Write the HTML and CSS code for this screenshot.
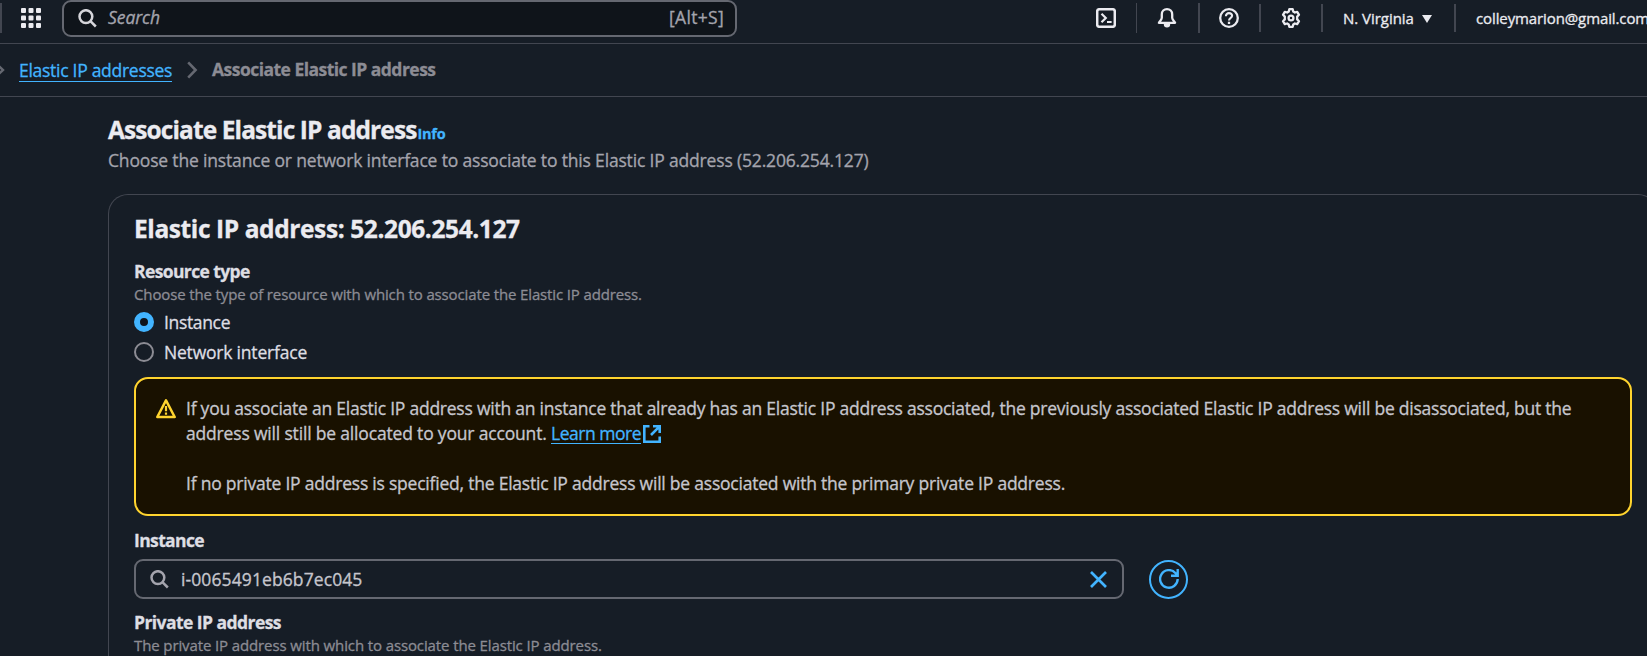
FILE: index.html
```html
<!DOCTYPE html>
<html lang="en">
<head>
<meta charset="utf-8">
<title>Associate Elastic IP address</title>
<link rel="stylesheet" href="styles.css">
</head>
<body>
<header class="topbar">
  <span class="edge"></span>
  <svg class="apps" width="20" height="20" viewBox="0 0 20 20" fill="#ebebf0">
    <rect x="0" y="0" width="5" height="5" rx="1"/><rect x="7.5" y="0" width="5" height="5" rx="1"/><rect x="15" y="0" width="5" height="5" rx="1"/>
    <rect x="0" y="7.5" width="5" height="5" rx="1"/><rect x="7.5" y="7.5" width="5" height="5" rx="1"/><rect x="15" y="7.5" width="5" height="5" rx="1"/>
    <rect x="0" y="15" width="5" height="5" rx="1"/><rect x="7.5" y="15" width="5" height="5" rx="1"/><rect x="15" y="15" width="5" height="5" rx="1"/>
  </svg>
  <div class="search">
    <svg width="19" height="19" viewBox="0 0 19 19" fill="none" stroke="#d5d5da" stroke-width="2.5"><circle cx="7.9" cy="7.6" r="6.4"/><path d="M12.4 12.1l5.4 5.4"/></svg>
    <span class="placeholder">Search</span>
    <span class="shortcut">[Alt+S]</span>
  </div>
  <nav class="tools">
    <span class="tool shell"><svg width="20" height="20" viewBox="0 0 20 20" fill="none" stroke="#ebebf0" stroke-width="2.5"><rect x="1.2" y="1.2" width="17.6" height="17.6" rx="2.2"/><path d="M5.5 5.7L9.8 10l-4.3 4.3M11 14h4.6" stroke-width="2.2"/></svg></span>
    <span class="tool bell"><svg width="20" height="20" viewBox="0 0 20 20" fill="none" stroke="#ebebf0" stroke-width="2.3" stroke-linejoin="round"><path d="M10 1.2c-3 0-5.2 2.200-5.200 5.200v3.400c0 2-1.700 3-2.900 5h16.200c-1.200-2-2.900-3-2.900-5V6.400c0-3-2.200-5.200-5.200-5.200z"/><path d="M7.500 16.300a2.500 2.500 0 0 0 5 0z" fill="#ebebf0" stroke-width="1.400"/></svg></span>
    <span class="tool help"><svg width="20" height="20" viewBox="0 0 20 20" fill="none" stroke="#ebebf0" stroke-width="2.3"><circle cx="10" cy="10" r="8.8"/><path d="M6.900 8.200c0-2 1.300-3.100 3.100-3.100s3.100 1.100 3.100 2.700c0 2.200-3.100 2-3.100 4.700" stroke-width="2.100"/><path d="M10 13.700v2.300"/></svg></span>
    <span class="tool gear"><svg width="20" height="20" viewBox="0 0 20 20" fill="none" stroke="#ebebf0" stroke-width="2.3" stroke-linejoin="round"><path d="M8.300 1.200h3.400l.6 2.400 1.500.9 2.400-.7 1.800 3-1.800 1.800v2.800l1.800 1.800-1.800 3-2.400-.7-1.500.9-.6 2.400H8.300l-.6-2.400-1.500-.9-2.400.7-1.800-3 1.800-1.800V8.600L2 6.800l1.800-3 2.400.7 1.500-.9z"/><circle cx="10" cy="10" r="2.4"/></svg></span>
    <span class="region">N. Virginia</span>
    <svg class="caret" width="10" height="8" viewBox="0 0 10 8"><path d="M0 0h10L5 8z" fill="#ebebf0"/></svg>
    <span class="account">colleymarion@gmail.com</span>
  </nav>
</header>
<nav class="crumbs">
  <svg width="5" height="16" viewBox="6 0 5 16" fill="none" stroke="#656871" stroke-width="2.4"><path d="M1.500 1L9 8l-7.500 7"/></svg>
  <a class="crumb-link">Elastic IP addresses</a>
  <svg class="sep" width="11" height="18" viewBox="0 0 11 18" fill="none" stroke="#656871" stroke-width="2.6"><path d="M1.200 1.400L8.600 9l-7.400 7.600"/></svg>
  <span class="crumb-here">Associate Elastic IP address</span>
</nav>
<main class="page">
  <div class="title-row"><h1>Associate Elastic IP address</h1><a class="info">Info</a></div>
  <p class="lead">Choose the instance or network interface to associate to this Elastic IP address (52.206.254.127)</p>
  <section class="card">
    <h2>Elastic IP address: 52.206.254.127</h2>
    <h3 class="label resource">Resource type</h3>
    <p class="hint">Choose the type of resource with which to associate the Elastic IP address.</p>
    <div class="radios">
      <label class="radio"><span class="dot on"></span><span class="inst">Instance</span></label>
      <label class="radio"><span class="dot"></span><span>Network interface</span></label>
    </div>
    <div class="alert">
      <svg class="warn" width="20" height="20" viewBox="0 0 20 20" fill="none" stroke="#ffd42e" stroke-width="2.5" stroke-linejoin="round"><path d="M10 1.400L18.700 18H1.300z"/><path d="M10 7v5.300M10 13.500v2.300" stroke-width="2.200"/></svg>
      <div>
        <p>If you associate an Elastic IP address with an instance that already has an Elastic IP address associated, the previously associated Elastic IP address will be disassociated, but the<br><span class="l2">address will still be allocated to your account. </span><a class="learn">Learn more</a><svg class="ext" width="18" height="18" viewBox="0 0 18 18" fill="none" stroke="#42b4ff" stroke-width="2.6"><path d="M6.500 1.300H1.300v15.400h15.400v-5.200M10 1.300h6.700V8M16.600 1.400L8 10"/></svg></p>
        <p class="second">If no private IP address is specified, the Elastic IP address will be associated with the primary private IP address.</p>
      </div>
    </div>
    <h3 class="label instance">Instance</h3>
    <div class="field">
      <div class="input">
        <svg width="19" height="19" viewBox="0 0 19 19" fill="none" stroke="#a4a4ad" stroke-width="2.5"><circle cx="7.900" cy="7.600" r="6.400"/><path d="M12.400 12.100l5.400 5.400"/></svg>
        <span class="value">i-0065491eb6b7ec045</span>
        <svg class="clear" width="17" height="17" viewBox="0 0 17 17" fill="none" stroke="#42b4ff" stroke-width="2.7"><path d="M1 1l15 15M16 1L1 16"/></svg>
      </div>
      <span class="refresh"><svg width="20" height="20" viewBox="0 0 20 20" fill="none" stroke="#42b4ff" stroke-width="2.4"><path d="M18.700 10a8.800 8.800 0 1 1-2.300-6L18 6M18.700 0v6.700H12"/></svg></span>
    </div>
    <h3 class="label private">Private IP address</h3>
    <p class="hint last">The private IP address with which to associate the Elastic IP address.</p>
  </section>
</main>
</body>
</html>
```
FILE: styles.css
```css
* { box-sizing: border-box; }
html { overflow: hidden; }
body {
  margin: 0; width: 1647px; height: 656px; overflow: hidden;
  background: #161d26; color: #dedee3;
  font: 400 17.5px/25px "Open Sans", "Noto Sans", sans-serif;
  letter-spacing: -.2px;
  -webkit-text-stroke: .3px;
}
h1, h2, h3, p { margin: 0; }
svg { display: block; flex: none; }
span, a, h1, h2, h3, p { white-space: nowrap; }

.topbar { display: flex; height: 44px; border-bottom: 1px solid #424650; }
.edge { width: 2px; height: 30px; margin-top: 3px; background: #424650; flex: none; }
.apps { margin: 8px 21px 0 19px; }
.search {
  display: flex; align-items: center; flex: none;
  width: 675px; height: 37px; padding: 0 11px 0 14px;
  border: 2px solid #656871; border-radius: 9px; background: #0f141a;
}
.placeholder { margin-left: 11px; padding-bottom: 2px; font-style: italic; letter-spacing: -.06px; color: #a4a4ad; }
.shortcut { margin-left: auto; padding-bottom: 2px; color: #a4a4ad; letter-spacing: .32px; }
.tools { display: flex; flex: none; margin-left: 345px; }
.tool { display: flex; height: 30px; margin-top: 3px; padding-top: 5px; border-right: 2px solid #424650; flex: none; }
.shell { width: 55px; padding-left: 14px; border-right-width: 1px; }
.bell { width: 63px; padding-left: 20px; }
.help { width: 61px; height: 28px; margin-top: 4px; padding: 4px 0 0 19px; }
.gear { width: 62px; height: 28px; margin-top: 4px; padding: 4px 0 0 20px; }
.region, .account { font-size: 15px; font-weight: 500; line-height: 20px; color: #ebebf0; }
.region { width: 70px; margin: 8px 0 0 20px; letter-spacing: -.03px; }
.caret { margin: 14.5px 0 0 9px; }
.account { margin: 4px 0 0 22px; padding: 4px 0 4px 20px; height: 28px; border-left: 2px solid #424650; letter-spacing: -.11px; }

.crumbs { display: flex; align-items: center; height: 53px; border-bottom: 1px solid #424650; }
.crumb-link { margin-left: 14px; width: 153px; height: 24px; margin-top: -1px; line-height: 24px; letter-spacing: -.28px; color: #42b4ff; border-bottom: 1px solid #42b4ff; }
.sep { margin: 0 14px 0 15px; }
.crumb-here { padding-bottom: 2px; font-weight: 700; letter-spacing: -.53px; color: #8c8c94; }

.page { padding: 18px 0 0 108px; }
.title-row { display: flex; height: 30px; }
h1, h2 { font-size: 24.5px; line-height: 30px; font-weight: 700; letter-spacing: -.9px; color: #ebebf0; }
h2 { letter-spacing: -.4px; }
.info { font-size: 14.5px; font-weight: 700; line-height: 30px; padding: 4px 0 0 1px; letter-spacing: -.23px; color: #42b4ff; }
.lead { margin-top: 3px; letter-spacing: -.168px; color: #a4a4ad; }
.card { width: 1550px; height: 462px; margin-top: 21px; padding: 19px 25px 0; border: 1px solid #424650; border-bottom: 0; border-radius: 20px 20px 0 0; }
.label { font-size: 17.5px; line-height: 25px; font-weight: 700; letter-spacing: -.62px; color: #dedee3; }
.resource { margin-top: 15px; }
.hint { font-size: 15px; line-height: 20px; letter-spacing: -.132px; color: #8c8c94; }
.last { letter-spacing: -.115px; }
.radios { display: grid; gap: 10px; margin: 8px 0 15px; }
.radio { display: flex; align-items: center; height: 20px; gap: 10px; }
.inst { letter-spacing: -.34px; }
.dot { width: 20px; height: 20px; border: 2px solid #8c8c94; border-radius: 50%; }
.dot.on { border: 6px solid #42b4ff; background: #0f141a; }
.alert {
  display: flex; gap: 10px; width: 1498px; height: 139px; padding: 17px 0 0 20px;
  border: 2px solid #ffd42e; border-radius: 14px; background: #191100; color: #c6c6cd;
  letter-spacing: -.235px;
}
.l2 { letter-spacing: -.175px; }
.warn { margin-top: 3px; }
.second { margin-top: 25px; letter-spacing: -.218px; }
.learn { letter-spacing: -.48px; color: #42b4ff; text-decoration: underline; text-underline-offset: 3px; text-decoration-thickness: 1px; }
.ext { display: inline-block; vertical-align: -3px; margin-left: 2px; }
.instance { margin-top: 12px; }
.field { display: flex; align-items: center; margin-top: 6px; }
.input {
  display: flex; align-items: center; width: 990px; height: 40px; padding: 0 15px 0 14px;
  border: 2px solid #656871; border-radius: 9px;
}
.value { margin-left: 12px; color: #c6c6cd; letter-spacing: .1px; }
.clear { margin-left: auto; }
.refresh { display: flex; align-items: center; justify-content: center; width: 39px; height: 39px; margin-left: 25px; border: 2px solid #42b4ff; border-radius: 50%; }
.private { margin-top: 11px; letter-spacing: -.56px; }
```
